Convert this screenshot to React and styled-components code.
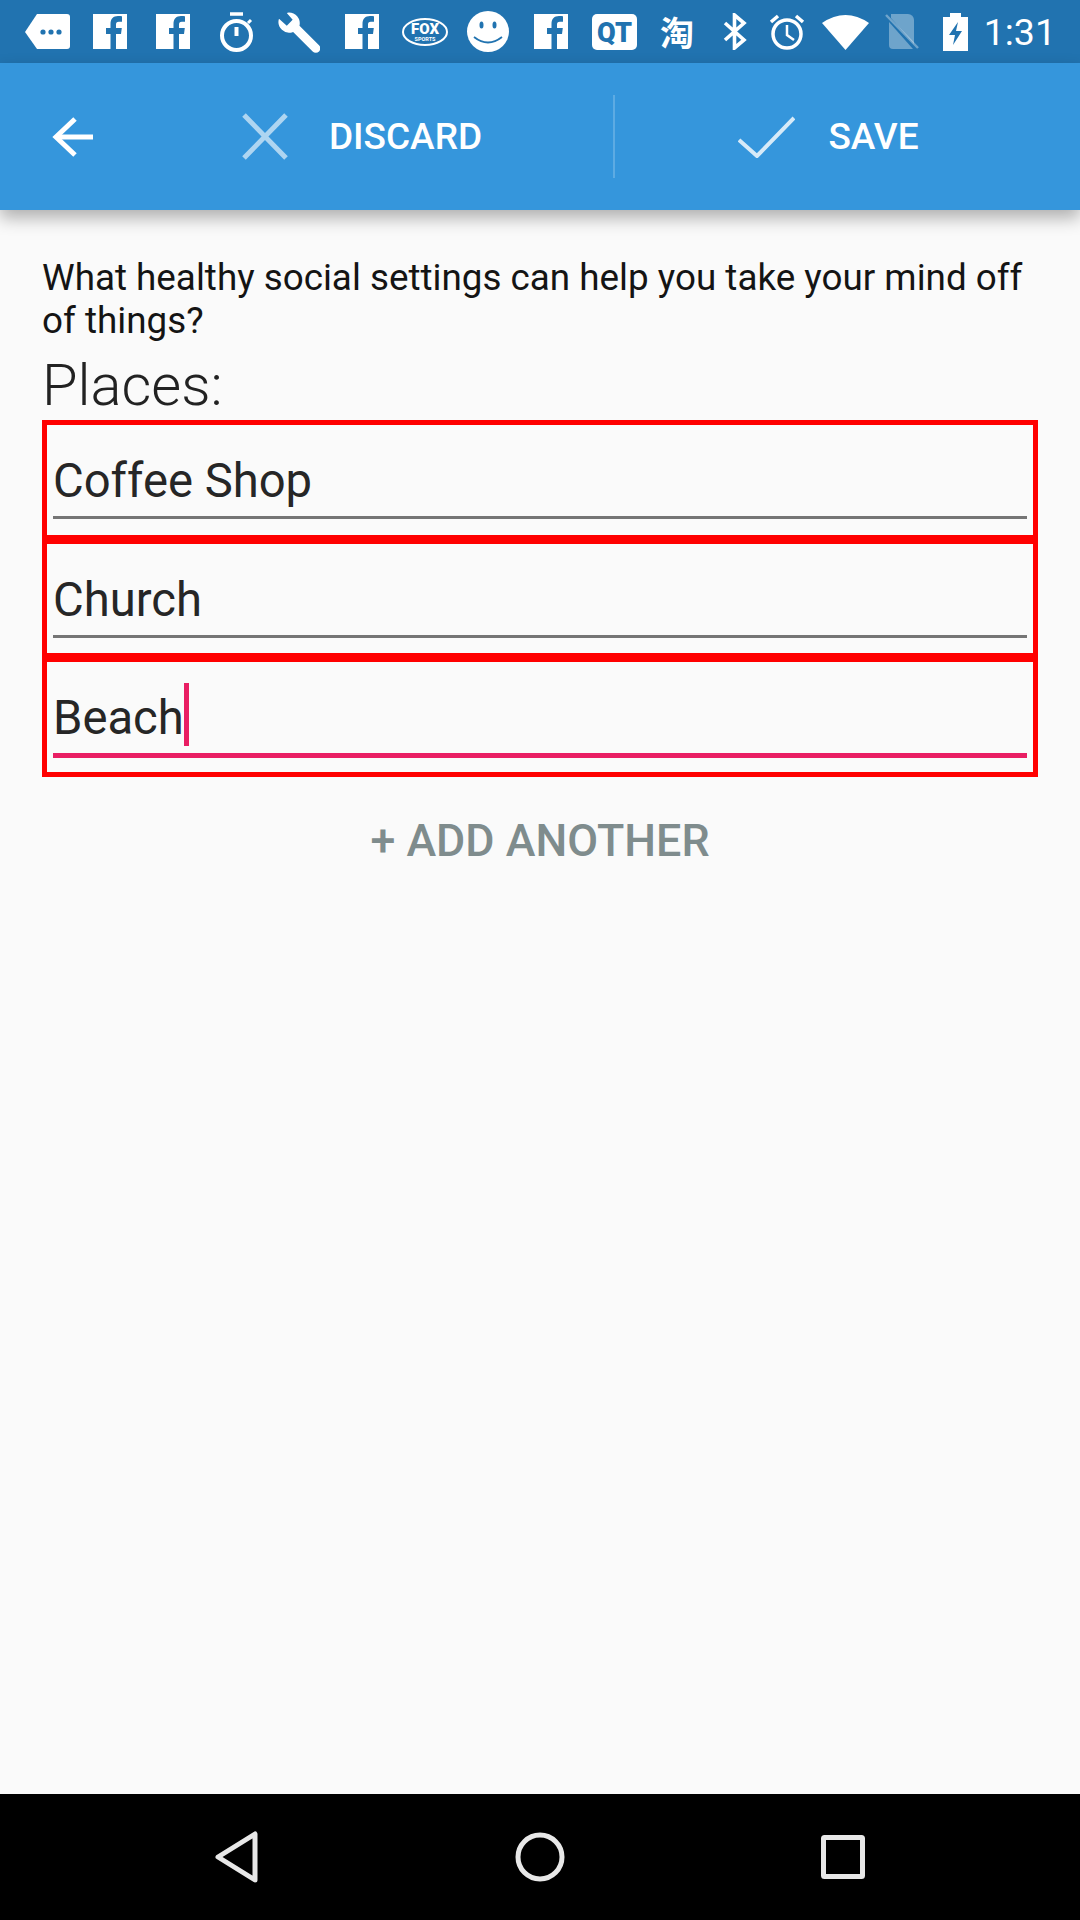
// NPM
import React from 'react';
import styled, { createGlobalStyle } from 'styled-components';

// STYLES
const GlobalStyle = createGlobalStyle`
  html, body {
    margin: 0;
    padding: 0;
    background: #fafafa;
  }

  body {
    font-family: Roboto, "Liberation Sans", sans-serif;
  }
`;

const Screen = styled.div`
  display: flex;
  flex-direction: column;
  width: 1080px;
  height: 1920px;
  overflow: hidden;
  background: #fafafa;
`;

const StatusBar = styled.div`
  display: flex;
  align-items: center;
  flex: none;
  height: 63px;
  padding: 0 24px 0 25px;
  background: #2173b0;
  color: #fff;
`;

const StatusIcon = styled.svg`
  flex: none;
  display: block;
  margin-left: ${(p) => p.$gap || 0}px;
`;

const Taobao = styled.span`
  flex: none;
  width: 34px;
  margin-left: 23px;
  font-family: "Noto Sans CJK SC", sans-serif;
  font-size: 34px;
  font-weight: 700;
  line-height: 40px;
`;

const Clock = styled.span`
  margin-left: auto;
  font-size: 37.5px;
  line-height: 42px;
`;

const AppBar = styled.div`
  position: relative;
  z-index: 1;
  display: flex;
  align-items: center;
  flex: none;
  height: 147px;
  background: #3596dc;
  box-shadow: 0 8px 16px rgba(0, 0, 0, 0.3);
`;

const BackButton = styled.div`
  display: flex;
  flex: none;
  width: 111px;
  padding-left: 52px;
  box-sizing: border-box;
`;

const BarAction = styled.div`
  display: flex;
  align-items: center;
  justify-content: center;
  gap: ${(p) => p.$gap}px;
  flex: none;
  width: ${(p) => p.$width}px;
  color: #fff;
  font-size: 37px;
  font-weight: 500;
  line-height: 42px;
`;

const BarDivider = styled.div`
  flex: none;
  width: 2px;
  height: 83px;
  margin-right: -1px;
  background: rgba(255, 255, 255, 0.2);
`;

const Content = styled.main`
  flex: 1;
  padding: 46px 42px 0;
`;

const Question = styled.p`
  margin: 0;
  color: #141414;
  font-size: 36.8px;
  line-height: 43px;
`;

const SectionLabel = styled.h2`
  margin: 10px 0 0;
  color: #222;
  font-size: 57.8px;
  font-weight: 300;
  line-height: 66px;
`;

const Fields = styled.div`
  display: flex;
  flex-direction: column;
  margin-top: 2px;
`;

const FieldBox = styled.div`
  height: ${(p) => p.$height}px;
  padding: 21px 6px 0;
  box-sizing: border-box;
  border: solid #f00;
  border-width: ${(p) => (p.$first ? '5px' : '4px 5px 5px')};
`;

const FieldText = styled.div`
  display: flex;
  align-items: center;
  height: 70px;
  border-bottom: ${(p) => (p.$active ? '5px solid #e91e63' : '3px solid #757575')};
  color: #262626;
  font-size: 47.2px;
  line-height: 54px;
`;

const Caret = styled.span`
  flex: none;
  align-self: flex-start;
  width: 5px;
  height: 63px;
  background: #e91e63;
`;

const AddAnother = styled.div`
  margin-top: 38px;
  color: #7f8c8d;
  font-size: 44.8px;
  font-weight: 500;
  line-height: 52px;
  text-align: center;
`;

const NavBar = styled.nav`
  display: grid;
  grid-template-columns: repeat(3, 1fr);
  align-items: center;
  justify-items: center;
  flex: none;
  height: 126px;
  padding: 0 85px;
  background: #000;
`;

// ICONS
const Facebook = ({ gap }) => (
  <StatusIcon $gap={gap} width="34" height="35" viewBox="0 0 34 35">
    <rect width="34" height="35" fill="#fff" />
    <path
      d="M23 35V20h5l.8-6H23v-3.500c0-1.700.6-2.800 2.900-2.800H29V2.300C28.300 2.200 26.800 2 25 2c-4.500 0-7.500 2.700-7.500 7.700V14H13v6h4.500v15z"
      fill="#2173b0"
    />
  </StatusIcon>
);

const statusIcons = (
  <>
    <StatusIcon width="45" height="35" viewBox="0 0 45 35">
      <path d="M12 0h30a3 3 0 0 1 3 3v29a3 3 0 0 1-3 3H12L0 18z" fill="#fff" />
      <circle cx="18" cy="18" r="2.600" fill="#2173b0" />
      <circle cx="26" cy="18" r="2.600" fill="#2173b0" />
      <circle cx="34" cy="18" r="2.600" fill="#2173b0" />
    </StatusIcon>
    <Facebook gap={23} />
    <Facebook gap={29} />
    <StatusIcon $gap={29} width="35" height="40" viewBox="0 0 35 40" fill="none">
      <path d="M11 2h13" stroke="#fff" strokeWidth="3.500" />
      <circle cx="17.500" cy="23.500" r="14.500" stroke="#fff" strokeWidth="4" />
      <path d="M17.500 15v9" stroke="#fff" strokeWidth="4" />
      <path d="M29 11l3-3" stroke="#fff" strokeWidth="3" />
    </StatusIcon>
    <StatusIcon $gap={24} width="42" height="42" viewBox="0 0 43 43">
      <path
        d="M11 1.500a11 11 0 0 1 11 13.500l20 20a4.500 4.500 0 0 1-6.500 6.500l-20-20A11 11 0 0 1 1 8l8 7 6-6-6-7z"
        fill="#fff"
      />
    </StatusIcon>
    <Facebook gap={25} />
    <StatusIcon $gap={23} width="46" height="28" viewBox="0 0 46 28">
      <ellipse cx="23" cy="14" rx="22" ry="13" fill="none" stroke="#fff" strokeWidth="2" />
      <text x="23" y="16" textAnchor="middle" fill="#fff" fontFamily="Roboto" fontWeight="900" fontSize="15">
        FOX
      </text>
      <text x="23" y="23" textAnchor="middle" fill="#fff" fontFamily="Roboto" fontWeight="700" fontSize="5.500">
        SPORTS
      </text>
    </StatusIcon>
    <StatusIcon $gap={19} width="42" height="41" viewBox="0 0 42 41">
      <ellipse cx="21" cy="20.500" rx="21" ry="20.500" fill="#fff" />
      <ellipse cx="14.500" cy="14" rx="2" ry="3.500" fill="#2173b0" />
      <ellipse cx="27.500" cy="14" rx="2" ry="3.500" fill="#2173b0" />
      <path d="M7 26q14 11 28 0" fill="none" stroke="#2173b0" strokeWidth="1.800" />
    </StatusIcon>
    <Facebook gap={25} />
    <StatusIcon $gap={24} width="45" height="36" viewBox="0 0 45 36">
      <rect width="45" height="36" rx="5" fill="#fff" />
      <text x="22.500" y="27.500" textAnchor="middle" fill="#2173b0" fontFamily="Roboto" fontWeight="900" fontSize="27">
        QT
      </text>
    </StatusIcon>
    <Taobao>淘</Taobao>
    <StatusIcon $gap={29} width="24" height="37" viewBox="0 0 24 37" fill="none">
      <path d="M2 10l19 17-9.500 8V2L21 10 2 27" stroke="#fff" strokeWidth="3.600" />
    </StatusIcon>
    <StatusIcon $gap={22} width="36" height="37" viewBox="0 0 36 37" fill="none">
      <circle cx="18" cy="21" r="14" stroke="#fff" strokeWidth="3.500" />
      <path d="M18 12v10l7 5" stroke="#fff" strokeWidth="2.500" />
      <path d="M2 9l7-6M34 9l-7-6" stroke="#fff" strokeWidth="3.500" />
    </StatusIcon>
    <StatusIcon $gap={17} width="47" height="37" viewBox="0 0 47 37">
      <path d="M0 10Q23.500-6 47 10L23.500 37z" fill="#fff" />
    </StatusIcon>
    <StatusIcon $gap={16} width="34" height="35" viewBox="0 0 34 35">
      <path d="M6 0h17a6 6 0 0 1 6 6v24L6 4z" fill="#fff" opacity="0.35" />
      <path d="M4 8l24 27H8a4 4 0 0 1-4-4z" fill="#fff" opacity="0.35" />
      <path d="M1 1l32 33" stroke="#fff" strokeWidth="2.500" opacity="0.35" />
    </StatusIcon>
    <StatusIcon $gap={24} width="25" height="38" viewBox="0 0 25 38">
      <path d="M7 0h11v4h7v34H0V4h7z" fill="#fff" />
      <path d="M15 9L6 22h6l-2 10 9-14h-6z" fill="#2173b0" />
    </StatusIcon>
  </>
);

// MODULE
export default function App() {
  return (
    <Screen>
      <GlobalStyle />
      <StatusBar>
        {statusIcons}
        <Clock>1:31</Clock>
      </StatusBar>
      <AppBar>
        <BackButton>
          <svg width="42" height="42" viewBox="0 0 42 42" fill="none" stroke="#fff" strokeWidth="5">
            <path d="M41 21H4" />
            <path d="M23 3L4 21l19 18" />
          </svg>
        </BackButton>
        <BarAction $width={502} $gap={41}>
          <svg width="46" height="47" viewBox="0 0 46 47" fill="none" stroke="#fff" strokeOpacity="0.6" strokeWidth="5">
            <path d="M2 2l42 43M44 2L2 45" />
          </svg>
          DISCARD
        </BarAction>
        <BarDivider />
        <BarAction $width={429} $gap={33}>
          <svg width="57" height="42" viewBox="0 0 57 42" fill="none" stroke="#fff" strokeOpacity="0.8" strokeWidth="4">
            <path d="M1 24l18 16L56 2" />
          </svg>
          SAVE
        </BarAction>
      </AppBar>
      <Content>
        <Question>What healthy social settings can help you take your mind off of things?</Question>
        <SectionLabel>Places:</SectionLabel>
        <Fields>
          <FieldBox $first $height={120}>
            <FieldText>Coffee Shop</FieldText>
          </FieldBox>
          <FieldBox $height={118}>
            <FieldText>Church</FieldText>
          </FieldBox>
          <FieldBox $height={119}>
            <FieldText $active>
              Beach
              <Caret />
            </FieldText>
          </FieldBox>
        </Fields>
        <AddAnother>+ ADD ANOTHER</AddAnother>
      </Content>
      <NavBar>
        <svg width="44" height="52" viewBox="0 0 44 52" fill="none" stroke="#e8e8e8" strokeWidth="5" strokeLinejoin="round">
          <path d="M40 3v46L3 26z" />
        </svg>
        <svg width="50" height="50" viewBox="0 0 50 50" fill="none" stroke="#e8e8e8" strokeWidth="5">
          <circle cx="25" cy="25" r="22" />
        </svg>
        <svg width="44" height="44" viewBox="0 0 44 44" fill="none" stroke="#e8e8e8" strokeWidth="5">
          <rect x="2.500" y="2.500" width="39" height="39" rx="1" />
        </svg>
      </NavBar>
    </Screen>
  );
}
